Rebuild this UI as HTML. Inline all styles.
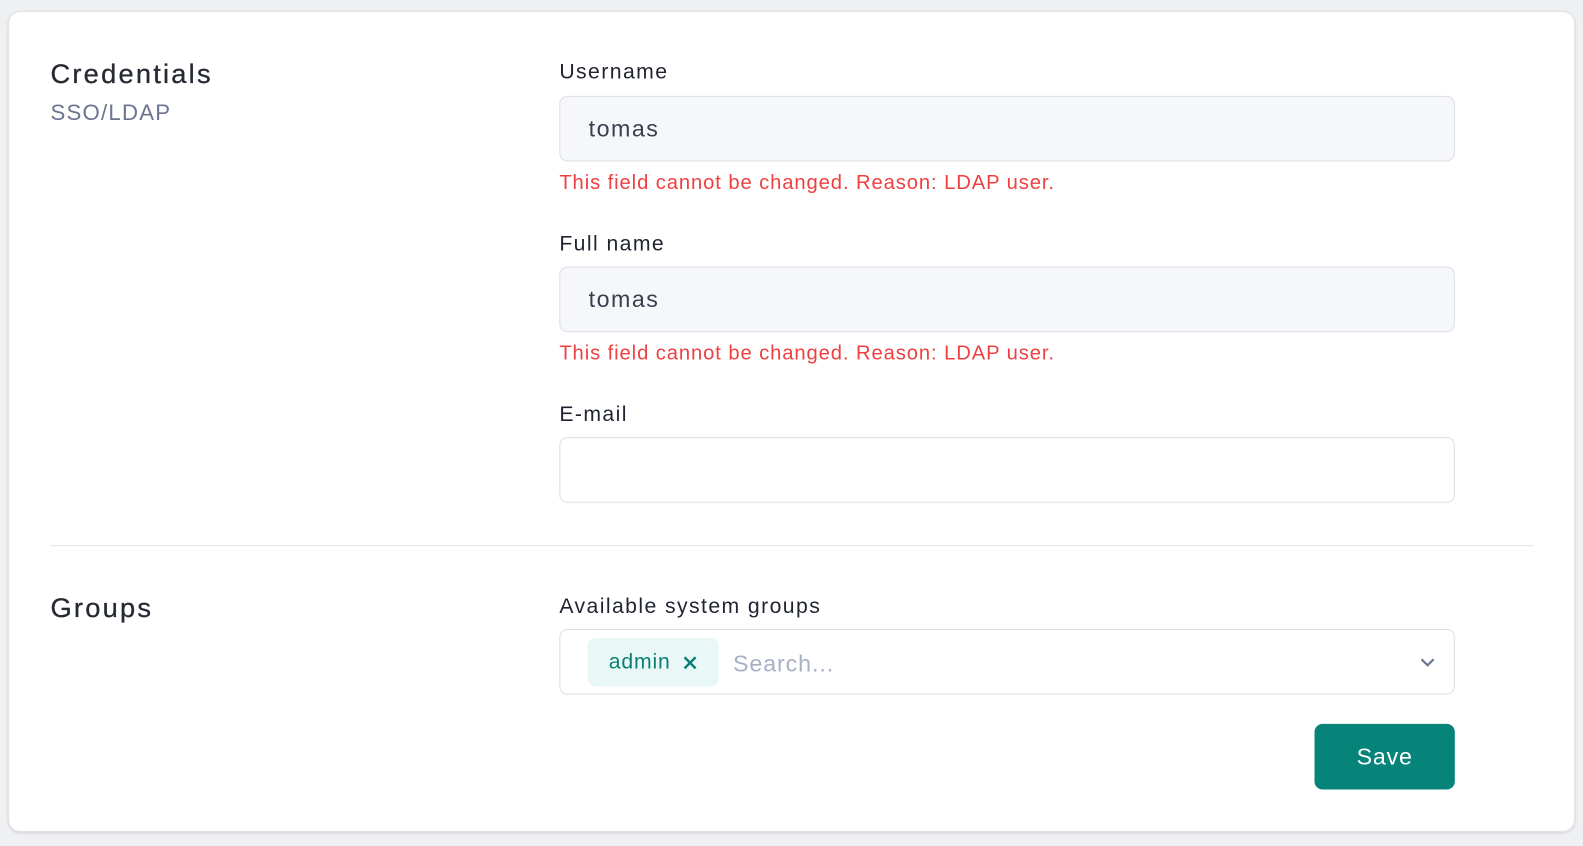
<!DOCTYPE html>
<html><head><style>
body{margin:0;width:1583px;height:846px;background:#eff0f2;font-family:"Liberation Sans",sans-serif;overflow:hidden}
#w{position:relative;transform:scale(1.0096);transform-origin:0 0;width:1568px;height:838px}
.card{position:absolute;left:8px;top:11px;width:1552px;height:813px;background:#fff;border:1px solid #e2e3e8;border-radius:12px;box-sizing:border-box;box-shadow:0 1px 3px rgba(0,0,0,.12)}
.a{position:absolute;white-space:nowrap}
.lbl{font-size:21px;color:#1f2430;line-height:24px;letter-spacing:1.4px}
.inp{position:absolute;left:554px;width:887px;height:65px;border:1px solid #dcdde6;border-radius:8px;box-sizing:border-box;font-size:23px;color:#3a3f4d;line-height:63px;padding-left:28px;letter-spacing:1.5px}
.ro{background:#f6f7fb}
.err{font-size:20px;color:#ee4040;line-height:24px;letter-spacing:0.9px}
h2{position:absolute;margin:0;font-size:27px;font-weight:normal;color:#262a33;line-height:32px;letter-spacing:2.2px;-webkit-text-stroke:0.3px #262a33}
</style></head><body><div id="w">
<div class="card"></div>
<h2 style="left:50px;top:57px">Credentials</h2>
<div class="a" style="left:50px;top:99px;font-size:22px;color:#6b7590;letter-spacing:1.2px">SSO/LDAP</div>
<div class="a lbl" style="left:554px;top:60px">Username</div>
<div class="inp ro" style="top:95px">tomas</div>
<div class="a err" style="left:554px;top:169px">This field cannot be changed. Reason: LDAP user.</div>
<div class="a lbl" style="left:554px;top:230px">Full name</div>
<div class="inp ro" style="top:264px">tomas</div>
<div class="a err" style="left:554px;top:338px">This field cannot be changed. Reason: LDAP user.</div>
<div class="a lbl" style="left:554px;top:399px">E-mail</div>
<div class="inp" style="top:433px"></div>
<div class="a" style="left:50px;top:540px;width:1469px;height:1px;background:#e2e3ea"></div>
<h2 style="left:50px;top:586px">Groups</h2>
<div class="a lbl" style="left:554px;top:589px">Available system groups</div>
<div class="inp" style="top:623px;padding:0"></div>
<div class="a" style="left:582px;top:632px;width:130px;height:48px;background:#e9f8f6;border-radius:8px"></div>
<div class="a" style="left:603px;top:643px;font-size:21px;color:#0b7f74;line-height:26px;letter-spacing:0.8px">admin</div>
<svg class="a" style="left:676px;top:649px" width="15" height="15" viewBox="0 0 15 15"><path d="M2 2L13 13M13 2L2 13" stroke="#0b7f74" stroke-width="2.4"/></svg>
<div class="a" style="left:726px;top:643px;font-size:23px;color:#a9b0c6;line-height:28px;letter-spacing:0.9px">Search...</div>
<svg class="a" style="left:1406px;top:650px" width="16" height="12" viewBox="0 0 16 12"><path d="M2 3L8 9L14 3" stroke="#6b7590" stroke-width="2.2" fill="none"/></svg>
<div class="a" style="left:1302px;top:717px;width:139px;height:65px;background:#06847a;border-radius:8px;color:#fff;font-size:23px;text-align:center;line-height:65px;letter-spacing:0.8px">Save</div>
</div></body></html>
